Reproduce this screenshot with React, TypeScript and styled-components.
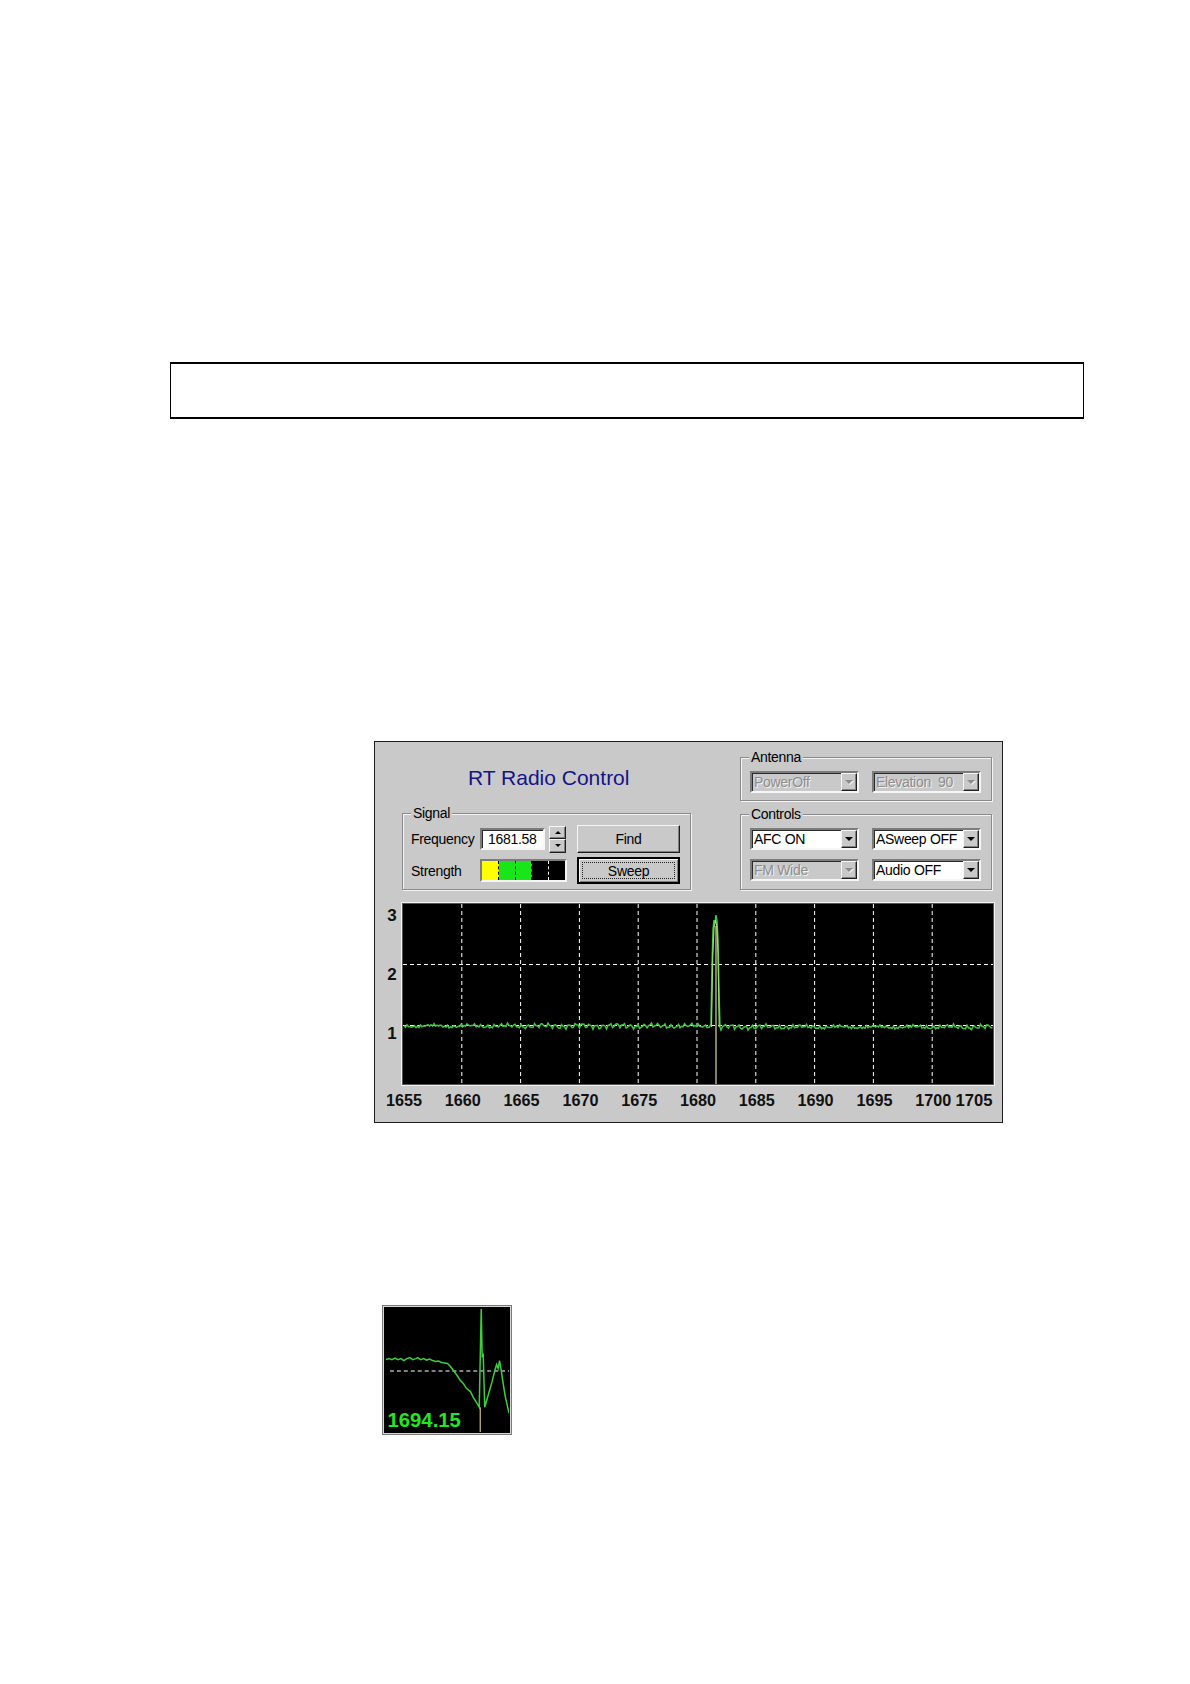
import React from 'react';
import styled, { createGlobalStyle } from 'styled-components';

const GlobalStyle = createGlobalStyle`
  html, body {
    margin: 0;
    padding: 0;
    background: #ffffff;
  }
  body {
    font-family: 'Liberation Sans', Arial, sans-serif;
  }
`;

const UI_FONT = `'Liberation Sans', Arial, sans-serif`;
const PANEL_BG = '#c9c9c9';

// deterministic wobble for the trace
const noise = (x: number) =>
  1.2 * Math.sin(x * 0.93) +
  1.0 * Math.sin(x * 2.31 + 0.5) +
  0.8 * Math.sin(x * 0.17 + 1.2) +
  0.7 * Math.sin(x * 5.1 + 2);

const buildTrace = () => {
  const pts: string[] = [];
  for (let x = 29; x <= 333; x += 1.5) pts.push(`${x},${(130 + noise(x)).toFixed(1)}`);
  pts.push('334.5,131', '336,128', '337,70', '338,34', '339,24', '340,27', '341,19', '342,25', '343,44', '344,96', '345,131', '346,134');
  for (let x = 347.5; x <= 618; x += 1.5) pts.push(`${x},${(131 + noise(x)).toFixed(1)}`);
  return pts.join(' ');
};

const TRACE = buildTrace();
const PEAK2 = '336.5,131 337.8,60 339,32 340.5,24 341.8,30 343,58 344.2,131';

const FREQS = ['1655', '1660', '1665', '1670', '1675', '1680', '1685', '1690', '1695', '1700'];

const SCOPE_TRACE =
  '1,52 4,51 7,52 10,50.5 13,52 16,51 19,53 22,51 25,50 28,52 31,51 33,50 36,52 39,51 42,52.5 45,51.5 48,53 51,54 54,53.5 57,55 60,55.5 63,56 66,59 69,63 72,67 76,73 79,76 82,81 86,84 89,90 92,95 95,100 97,1 98,50 99,46 100.5,100 104,88 108,74 111,62 112.5,57 114,61 115.5,53 117,62 121,88 125,106';

const App: React.FC = () => {
  return (
    <Page>
      <GlobalStyle />
      <NoteBox />

      <Panel>
        <TopRow>
          <LeftColumn>
            <Title>RT Radio Control</Title>
            <GroupBox>
              <Legend>Signal</Legend>
              <SignalGrid>
                <FieldLabel>Frequency</FieldLabel>
                <FieldCell>
                  <NumberInput>1681.58</NumberInput>
                  <Spinner>
                    <SpinButton>
                      <Arrow up small />
                    </SpinButton>
                    <SpinButton>
                      <Arrow small />
                    </SpinButton>
                  </Spinner>
                </FieldCell>
                <PushButton>Find</PushButton>

                <FieldLabel>Strength</FieldLabel>
                <FieldCell>
                  <Meter>
                    <Segment fill="#ffff00" divider="#000" />
                    <Segment fill="#19e619" divider="#000" />
                    <Segment fill="#19e619" divider="#000" />
                    <Segment fill="#000" divider="#fff" />
                    <Segment fill="#000" last />
                  </Meter>
                </FieldCell>
                <DefaultButton>
                  <FocusRing>Sweep</FocusRing>
                </DefaultButton>
              </SignalGrid>
            </GroupBox>
          </LeftColumn>

          <RightColumn>
            <GroupBox>
              <Legend>Antenna</Legend>
              <ComboRow>
                <Combo disabled value="PowerOff" />
                <Combo disabled value="Elevation  90" />
              </ComboRow>
            </GroupBox>
            <GroupBox>
              <Legend>Controls</Legend>
              <ComboGrid>
                <Combo value="AFC ON" />
                <Combo value="ASweep OFF" />
                <Combo disabled value="FM Wide" />
                <Combo value="Audio OFF" />
              </ComboGrid>
            </GroupBox>
          </RightColumn>
        </TopRow>

        <Chart viewBox="0 0 627 226" width={627} height={226}>
          <rect x={26.5} y={6.5} width={593} height={183} fill="none" stroke="#f2f2f2" />
          <rect x={27.5} y={7.5} width={591} height={181} fill="#000" stroke="#555" />
          {Array.from({ length: 9 }, (_, i) => {
            const x = 28 + 58.8 * (i + 1);
            return <line key={i} x1={x} y1={8} x2={x} y2={188} stroke="#fff" strokeWidth={1} strokeDasharray="4 3" />;
          })}
          <line x1={28} y1={68.5} x2={618} y2={68.5} stroke="#fff" strokeDasharray="4 3" />
          <line x1={28} y1={129.5} x2={618} y2={129.5} stroke="#fff" strokeDasharray="4 3" />
          <polyline points={TRACE} fill="none" stroke="#42c442" strokeWidth={1.5} />
          <polyline points={PEAK2} fill="none" stroke="#8ee86a" strokeWidth={1.1} />
          <line x1={341} y1={30} x2={341} y2={188} stroke="#cfc886" strokeWidth={1.3} />

          <AxisText x={17} y={25} textAnchor="middle">3</AxisText>
          <AxisText x={17} y={84} textAnchor="middle">2</AxisText>
          <AxisText x={17} y={143} textAnchor="middle">1</AxisText>

          {FREQS.map((f, i) => (
            <AxisText key={f} x={29 + 58.8 * i} y={210} textAnchor="middle" textLength={36} lengthAdjust="spacingAndGlyphs">
              {f}
            </AxisText>
          ))}
          <AxisText x={599} y={210} textAnchor="middle" textLength={37} lengthAdjust="spacingAndGlyphs">
            1705
          </AxisText>
        </Chart>
      </Panel>

      <Scope>
        <svg viewBox="0 0 125 125" width={125} height={125}>
          <rect width={125} height={125} fill="#000" />
          <line x1={5} y1={63.5} x2={125} y2={63.5} stroke="#fff" strokeWidth={1.2} strokeDasharray="4 3" />
          <polyline points={SCOPE_TRACE} fill="none" stroke="#3ad03a" strokeWidth={1.5} />
          <line x1={96} y1={100} x2={96} y2={125} stroke="#d2c27a" strokeWidth={1.2} />
          <ScopeText x={2.5} y={119.5} textLength={74} lengthAdjust="spacingAndGlyphs">
            1694.15
          </ScopeText>
        </svg>
      </Scope>
    </Page>
  );
};

const Combo: React.FC<{ value: string; disabled?: boolean }> = ({ value, disabled }) => (
  <ComboBox disabled={disabled}>
    <ComboText disabled={disabled}>{value}</ComboText>
    <DropButton>
      <Arrow disabled={disabled} />
    </DropButton>
  </ComboBox>
);

const Page = styled.div`
  display: flex;
  flex-direction: column;
  align-items: flex-start;
  padding-top: 362px;
  min-height: 1684px;
  box-sizing: border-box;
`;

const NoteBox = styled.div`
  margin-left: 170px;
  width: 914px;
  height: 57px;
  box-sizing: border-box;
  border: 2px solid #000;
  border-left-width: 1.5px;
  border-right-width: 1.5px;
`;

const Panel = styled.div`
  margin: 322px 0 0 374px;
  width: 629px;
  height: 382px;
  box-sizing: border-box;
  border: 1px solid #1e1e1e;
  background: ${PANEL_BG};
  font-family: ${UI_FONT};
  font-size: 14px;
  letter-spacing: -0.3px;
  color: #000;
`;

const TopRow = styled.div`
  display: flex;
  gap: 49px;
  padding-left: 27px;
`;

const LeftColumn = styled.div`
  width: 289px;
  display: flex;
  flex-direction: column;
`;

const RightColumn = styled.div`
  width: 252px;
  display: flex;
  flex-direction: column;
  gap: 13px;
  padding-top: 15px;
`;

const Title = styled.div`
  height: 71px;
  display: flex;
  align-items: center;
  padding-left: 66px;
  font-size: 21px;
  letter-spacing: 0;
  color: #141488;
`;

const GroupBox = styled.div`
  position: relative;
  box-sizing: border-box;
  border: 1px solid #8a8a8a;
  box-shadow: inset 1px 1px 0 #f4f4f4, 1px 1px 0 #f4f4f4;
`;

const Legend = styled.span`
  position: absolute;
  top: -9px;
  left: 8px;
  padding: 0 2px;
  background: ${PANEL_BG};
  line-height: 16px;
`;

const SignalGrid = styled.div`
  display: grid;
  grid-template-columns: 59px 87px 103px;
  grid-template-rows: 28px 27px;
  column-gap: 10px;
  row-gap: 4px;
  padding: 11px 10px 5px 8px;
  align-items: center;
`;

const FieldLabel = styled.span`
  line-height: 18px;
  white-space: nowrap;
`;

const FieldCell = styled.div`
  display: flex;
  align-items: center;
  gap: 4px;
`;

const sunken = `
  box-sizing: border-box;
  border-style: solid;
  border-width: 2px;
  border-color: #7c7c7c #f6f6f6 #f6f6f6 #7c7c7c;
  box-shadow: inset 1px 1px 0 #2a2a2a;
`;

const raised = `
  box-sizing: border-box;
  border-style: solid;
  border-width: 1px;
  border-color: #f6f6f6 #1e1e1e #1e1e1e #f6f6f6;
  box-shadow: inset -1px -1px 0 #808080;
  background: ${PANEL_BG};
`;

const NumberInput = styled.div`
  ${sunken};
  width: 65px;
  height: 22px;
  background: #fff;
  padding-left: 6px;
  line-height: 18px;
`;

const Spinner = styled.div`
  display: flex;
  flex-direction: column;
  width: 17px;
  height: 27px;
`;

const SpinButton = styled.div`
  ${raised};
  flex: 1;
  display: flex;
  align-items: center;
  justify-content: center;
`;

const Arrow = styled.span<{ up?: boolean; small?: boolean; disabled?: boolean }>`
  width: 0;
  height: 0;
  border-left: ${({ small }) => (small ? 3 : 4)}px solid transparent;
  border-right: ${({ small }) => (small ? 3 : 4)}px solid transparent;
  ${({ up, small, disabled }) =>
    `${up ? 'border-bottom' : 'border-top'}: ${small ? 3 : 4}px solid ${disabled ? '#8c8c8c' : '#000'};`}
  ${({ disabled }) => disabled && 'filter: drop-shadow(1px 1px 0 #f4f4f4);'}
`;

const PushButton = styled.div`
  ${raised};
  height: 28px;
  display: flex;
  align-items: center;
  justify-content: center;
`;

const DefaultButton = styled.div`
  ${raised};
  height: 27px;
  border: 2px solid #000;
  box-shadow: inset 1px 1px 0 #f6f6f6, inset -1px -1px 0 #808080;
  padding: 3px;
  display: flex;
`;

const FocusRing = styled.div`
  flex: 1;
  border: 1px dotted #222;
  display: flex;
  align-items: center;
  justify-content: center;
  line-height: 16px;
`;

const Meter = styled.div`
  ${sunken};
  width: 87px;
  height: 23px;
  display: flex;
  background: #000;
`;

const Segment = styled.div<{ fill: string; divider?: string; last?: boolean }>`
  flex: 1;
  background: ${({ fill }) => fill};
  border-right: ${({ last, divider }) => (last ? 'none' : `1px dashed ${divider}`)};
`;

const ComboRow = styled.div`
  display: flex;
  gap: 13px;
  padding: 13px 10px 7px 9px;
`;

const ComboGrid = styled.div`
  display: grid;
  grid-template-columns: 109px 109px;
  grid-auto-rows: 22px;
  column-gap: 13px;
  row-gap: 9px;
  padding: 13px 10px 8px 9px;
`;

const ComboBox = styled.div<{ disabled?: boolean }>`
  ${sunken};
  width: 109px;
  height: 22px;
  background: ${({ disabled }) => (disabled ? PANEL_BG : '#fff')};
  display: flex;
  align-items: stretch;
`;

const ComboText = styled.span<{ disabled?: boolean }>`
  flex: 1;
  padding-left: 2px;
  line-height: 18px;
  white-space: pre;
  overflow: hidden;
  color: ${({ disabled }) => (disabled ? '#8e8e8e' : '#000')};
  text-shadow: ${({ disabled }) => (disabled ? '1px 1px 0 #f2f2f2' : 'none')};
`;

const DropButton = styled.div`
  ${raised};
  width: 16px;
  display: flex;
  align-items: center;
  justify-content: center;
`;

const Chart = styled.svg`
  display: block;
  margin-top: 6px;
`;

const AxisText = styled.text`
  font-family: 'Liberation Sans', Arial, sans-serif;
  font-weight: bold;
  font-size: 17px;
  letter-spacing: 0;
  fill: #111;
`;

const Scope = styled.div`
  margin: 182px 0 0 382px;
  width: 130px;
  height: 130px;
  box-sizing: border-box;
  border: 1px solid #7a7a7a;
  box-shadow: inset 0 0 0 1px #d6d6d6;
  padding: 2px;
  background: #000;

  svg {
    display: block;
    width: 124px;
    height: 124px;
  }
`;

const ScopeText = styled.text`
  font-family: 'Liberation Sans', Arial, sans-serif;
  font-weight: bold;
  font-size: 20px;
  fill: #22e622;
`;

export default App;
